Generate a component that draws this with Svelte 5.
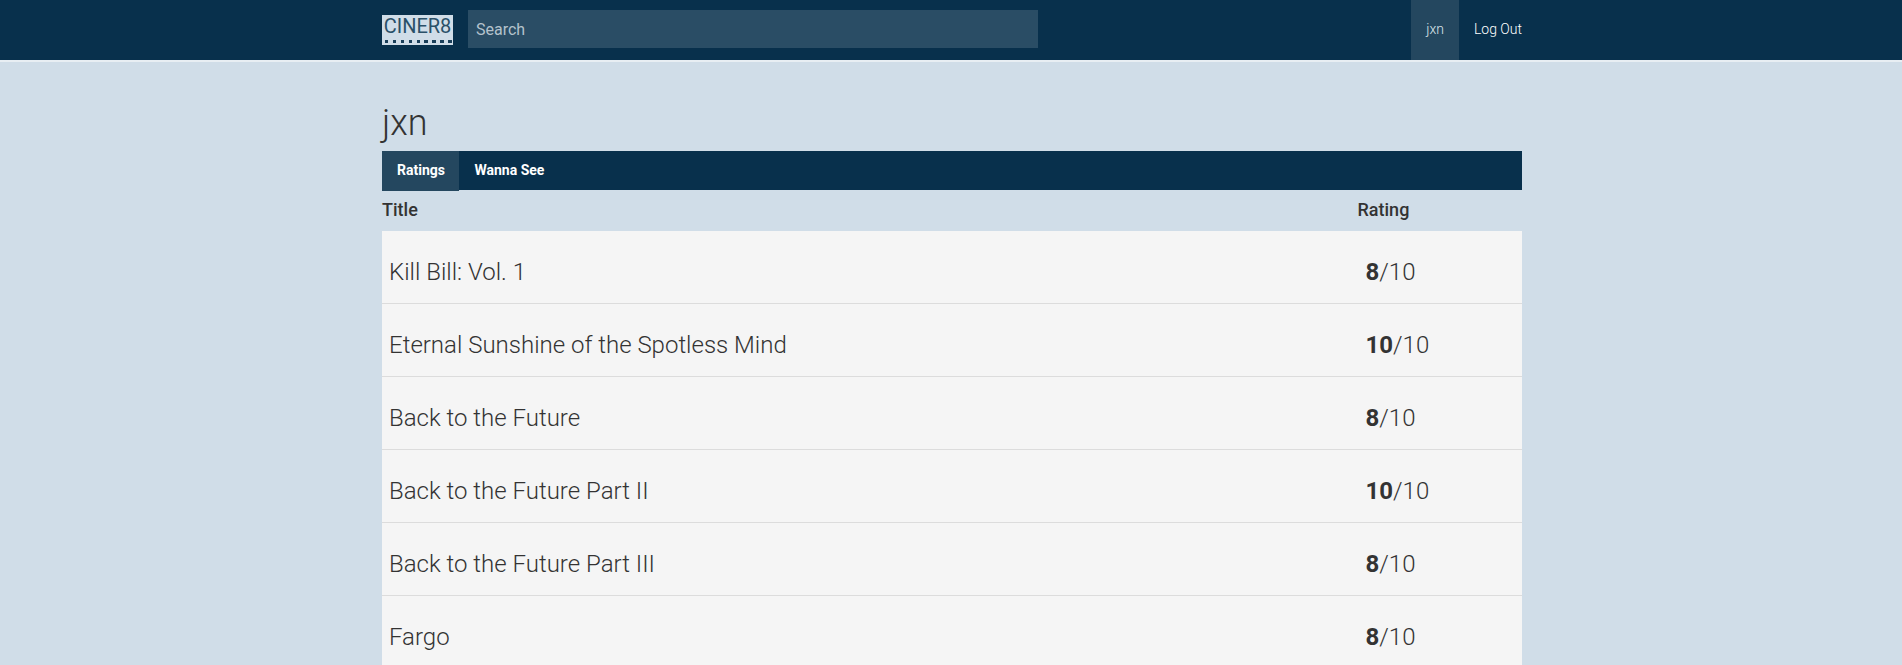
<script lang="ts">
	const ratings = [
		{ title: 'Kill Bill: Vol. 1', score: 8 },
		{ title: 'Eternal Sunshine of the Spotless Mind', score: 10 },
		{ title: 'Back to the Future', score: 8 },
		{ title: 'Back to the Future Part II', score: 10 },
		{ title: 'Back to the Future Part III', score: 8 },
		{ title: 'Fargo', score: 8 }
	];
</script>

<header class="navbar">
	<div class="container nav-inner">
		<a class="logo" href="#home">
			<span class="logo-text">CINER8</span>
			<span class="logo-strip"></span>
		</a>
		<input class="search" type="text" placeholder="Search" />
		<nav class="nav-links">
			<a class="nav-link active" href="#profile">jxn</a>
			<a class="nav-link" href="#logout">Log Out</a>
		</nav>
	</div>
</header>

<main class="container">
	<h1>jxn</h1>
	<div class="tabs">
		<a class="tab active" href="#ratings">Ratings</a>
		<a class="tab" href="#wanna-see">Wanna See</a>
	</div>
	<table>
		<thead>
			<tr>
				<th>Title</th>
				<th class="rating-col">Rating</th>
			</tr>
		</thead>
		<tbody>
			{#each ratings as row}
				<tr>
					<td class="title-col">{row.title}</td>
					<td class="rating-col"><strong>{row.score}</strong>/10</td>
				</tr>
			{/each}
		</tbody>
	</table>
</main>

<style>
	:global(body) {
		background: #d0dde8;
		color: #333;
		font-family: Roboto, sans-serif;
		overflow: hidden;
	}

	.container {
		width: 1140px;
		margin: 0 380px 0 382px;
	}

	.navbar {
		height: 60px;
		background: #08304c;
		border-bottom: 2px solid #e8eef3;
	}

	.nav-inner {
		display: flex;
		align-items: center;
		height: 60px;
	}

	.logo {
		display: flex;
		flex-direction: column;
		flex-shrink: 0;
		width: 71px;
		height: 30px;
		background: #d0dde8;
		text-decoration: none;
		overflow: hidden;
	}

	.logo-text {
		font-size: 20px;
		line-height: 23px;
		color: #2a5068;
		text-align: center;
	}

	.logo-strip {
		height: 7px;
		background-image: repeating-linear-gradient(90deg, transparent 0 3px, #1a3f5a 3px 6.5px, transparent 6.5px 7.9px);
		background-size: 100% 3px;
		background-repeat: no-repeat;
		background-position: 0 2px;
	}

	.search {
		box-sizing: border-box;
		width: 570px;
		height: 38px;
		margin: 0 0 2px 15px;
		padding: 0 8px;
		border: 0;
		border-radius: 0;
		background: #2a4d65;
		color: #fff;
		font: 16px Roboto, sans-serif;
	}

	.search::placeholder {
		color: #b4c2cc;
		opacity: 1;
	}

	.nav-links {
		display: flex;
		margin-left: auto;
		height: 60px;
	}

	.nav-link {
		display: flex;
		align-items: center;
		padding: 0 15px 2px;
		font-size: 14px;
		font-weight: 300;
		color: #fff;
		text-decoration: none;
	}

	.nav-link:last-child {
		padding-right: 0;
	}

	.nav-link.active {
		background: #24475f;
		color: #dbe4ea;
	}

	h1 {
		margin: 0;
		padding-top: 38px;
		height: 51px;
		font-size: 36px;
		line-height: 46px;
		font-weight: 300;
		color: #333;
	}

	.tabs {
		display: flex;
		height: 39px;
		background: #08304c;
	}

	.tab {
		display: flex;
		align-items: center;
		padding: 0 15px 2px;
		font-size: 14px;
		font-weight: 700;
		color: #fff;
		text-decoration: none;
	}

	.tab.active {
		height: 38px;
		padding-right: 14.5px;
		background: #24475f;
	}

	table {
		width: 100%;
		border-collapse: separate;
		border-spacing: 0;
		table-layout: fixed;
	}

	th {
		box-sizing: border-box;
		height: 41px;
		padding: 0 0 2px;
		font-size: 18px;
		font-weight: 500;
		text-align: left;
		color: #333;
	}

	td {
		box-sizing: border-box;
		height: 73px;
		padding: 10px 8px 0;
		background: #f5f5f5;
		border-bottom: 1px solid #dcdcdc;
		font-size: 24px;
		font-weight: 300;
		color: #333;
	}

	td.title-col {
		padding-left: 7px;
	}

	td strong {
		font-weight: 700;
	}

	.rating-col {
		width: 164.5px;
	}
</style>
